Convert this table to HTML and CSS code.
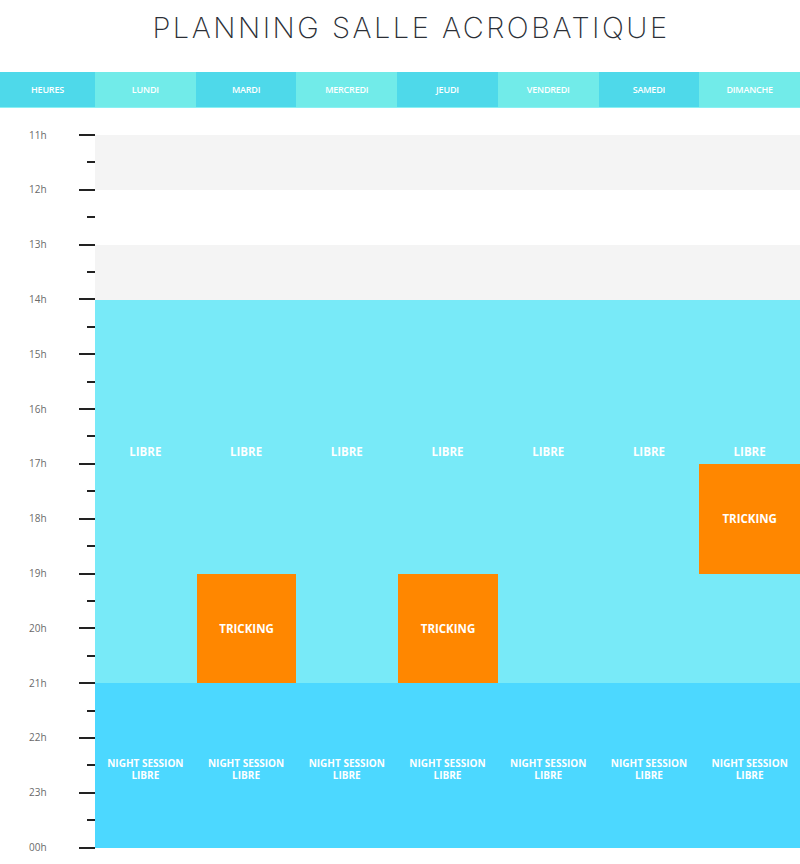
FILE: index.html
```html
<!DOCTYPE html>
<html lang="fr">
<head>
<meta charset="utf-8">
<title>Planning salle acrobatique</title>
<link rel="stylesheet" href="styles.css">
</head>
<body>
<h1 class="title">PLANNING SALLE ACROBATIQUE</h1>
<div class="head-row">
  <div class="head-cell dark">HEURES</div>
  <div class="head-cell light">LUNDI</div>
  <div class="head-cell dark">MARDI</div>
  <div class="head-cell light">MERCREDI</div>
  <div class="head-cell dark">JEUDI</div>
  <div class="head-cell light">VENDREDI</div>
  <div class="head-cell dark">SAMEDI</div>
  <div class="head-cell light">DIMANCHE</div>
</div>
<div class="schedule">
  <div class="axis">
    <div class="tick-row major"><span class="hour">11h</span><i></i></div>
    <div class="tick-row minor"><span class="hour"></span><i></i></div>
    <div class="tick-row major"><span class="hour">12h</span><i></i></div>
    <div class="tick-row minor"><span class="hour"></span><i></i></div>
    <div class="tick-row major"><span class="hour">13h</span><i></i></div>
    <div class="tick-row minor"><span class="hour"></span><i></i></div>
    <div class="tick-row major"><span class="hour">14h</span><i></i></div>
    <div class="tick-row minor"><span class="hour"></span><i></i></div>
    <div class="tick-row major"><span class="hour">15h</span><i></i></div>
    <div class="tick-row minor"><span class="hour"></span><i></i></div>
    <div class="tick-row major"><span class="hour">16h</span><i></i></div>
    <div class="tick-row minor"><span class="hour"></span><i></i></div>
    <div class="tick-row major"><span class="hour">17h</span><i></i></div>
    <div class="tick-row minor"><span class="hour"></span><i></i></div>
    <div class="tick-row major"><span class="hour">18h</span><i></i></div>
    <div class="tick-row minor"><span class="hour"></span><i></i></div>
    <div class="tick-row major"><span class="hour">19h</span><i></i></div>
    <div class="tick-row minor"><span class="hour"></span><i></i></div>
    <div class="tick-row major"><span class="hour">20h</span><i></i></div>
    <div class="tick-row minor"><span class="hour"></span><i></i></div>
    <div class="tick-row major"><span class="hour">21h</span><i></i></div>
    <div class="tick-row minor"><span class="hour"></span><i></i></div>
    <div class="tick-row major"><span class="hour">22h</span><i></i></div>
    <div class="tick-row minor"><span class="hour"></span><i></i></div>
    <div class="tick-row major"><span class="hour">23h</span><i></i></div>
    <div class="tick-row minor"><span class="hour"></span><i></i></div>
    <div class="tick-row major"><span class="hour">00h</span><i></i></div>
  </div>
  <div class="days">
    <div class="band band-11"></div>
    <div class="band band-13"></div>

    <div class="slot libre d1">LIBRE</div>
    <div class="slot libre d2">LIBRE</div>
    <div class="slot libre d3">LIBRE</div>
    <div class="slot libre d4">LIBRE</div>
    <div class="slot libre d5">LIBRE</div>
    <div class="slot libre d6">LIBRE</div>
    <div class="slot libre d7">LIBRE</div>

    <div class="slot night d1"><span class="line">NIGHT SESSION</span><span class="line">LIBRE</span></div>
    <div class="slot night d2"><span class="line">NIGHT SESSION</span><span class="line">LIBRE</span></div>
    <div class="slot night d3"><span class="line">NIGHT SESSION</span><span class="line">LIBRE</span></div>
    <div class="slot night d4"><span class="line">NIGHT SESSION</span><span class="line">LIBRE</span></div>
    <div class="slot night d5"><span class="line">NIGHT SESSION</span><span class="line">LIBRE</span></div>
    <div class="slot night d6"><span class="line">NIGHT SESSION</span><span class="line">LIBRE</span></div>
    <div class="slot night d7"><span class="line">NIGHT SESSION</span><span class="line">LIBRE</span></div>

    <div class="slot tricking d2 evening">TRICKING</div>
    <div class="slot tricking d4 evening">TRICKING</div>
    <div class="slot tricking d7 afternoon">TRICKING</div>
  </div>
</div>
</body>
</html>
```

FILE: styles.css
```css
* { box-sizing: border-box; }

html, body {
  margin: 0;
  padding: 0;
  background: #ffffff;
  font-family: "Open Sans", "Liberation Sans", sans-serif;
}

.title {
  margin: 0;
  height: 72px;
  padding: 10px 0 0 22px;
  text-align: center;
  font-family: Inter, "Open Sans", sans-serif;
  font-weight: 200;
  font-size: 29px;
  line-height: 36px;
  letter-spacing: 2.5px;
  color: #2b2f36;
}

.head-row {
  display: grid;
  grid-template-columns: 95px repeat(7, 1fr);
  height: 36px;
  border-bottom: 1px solid #8af0f3;
}

.head-cell {
  display: flex;
  align-items: center;
  justify-content: center;
  color: #ffffff;
  font-size: 9px;
  font-weight: 600;
  letter-spacing: -0.2px;
}

.head-cell.dark { background: #4ed9ea; }
.head-cell.light { background: #71ebe9; }

.schedule {
  display: flex;
  margin-top: 27px;
}

.axis {
  width: 95px;
  flex: none;
  margin-top: -13.71px;
  display: flex;
  flex-direction: column;
}

.tick-row {
  height: 27.42px;
  flex: none;
  display: flex;
  align-items: center;
  justify-content: space-between;
}

.hour {
  padding-left: 29px;
  font-size: 10px;
  line-height: 12px;
  color: #6a6a6a;
  margin-top: -1px;
}

.tick-row i {
  display: block;
  height: 2px;
  background: #222222;
}

.tick-row.major i { width: 16px; }
.tick-row.minor i { width: 8px; }

.days {
  flex: 1;
  height: 713px;
  display: grid;
  grid-template-columns: repeat(7, 1fr);
  grid-template-rows: repeat(26, 1fr);
}

.band {
  grid-column: 1 / -1;
  background: #f4f4f4;
}
.band-11 { grid-row: 1 / 3; }
.band-13 { grid-row: 5 / 7; }

.d1 { grid-column: 1; }
.d2 { grid-column: 2; }
.d3 { grid-column: 3; }
.d4 { grid-column: 4; }
.d5 { grid-column: 5; }
.d6 { grid-column: 6; }
.d7 { grid-column: 7; }

.slot {
  color: #ffffff;
  font-weight: 700;
  text-align: center;
}

.libre {
  grid-row: 7 / 21;
  background: #78eaf8;
  font-size: 11.5px;
  line-height: 16px;
  padding-top: 144px;
}

.night {
  grid-row: 21 / 27;
  background: #4cd8ff;
  font-size: 10px;
  line-height: 12px;
  display: flex;
  flex-direction: column;
  align-items: center;
  justify-content: center;
  padding-top: 7px;
}

.night .line {
  display: block;
  height: 12px;
}

.tricking {
  background: #ff8700;
  font-size: 11.5px;
  line-height: 16px;
  display: flex;
  align-items: center;
  justify-content: center;
  margin-left: 1px;
}

.tricking.evening { grid-row: 17 / 21; }
.tricking.afternoon { grid-row: 13 / 17; margin-left: 0; }
```
